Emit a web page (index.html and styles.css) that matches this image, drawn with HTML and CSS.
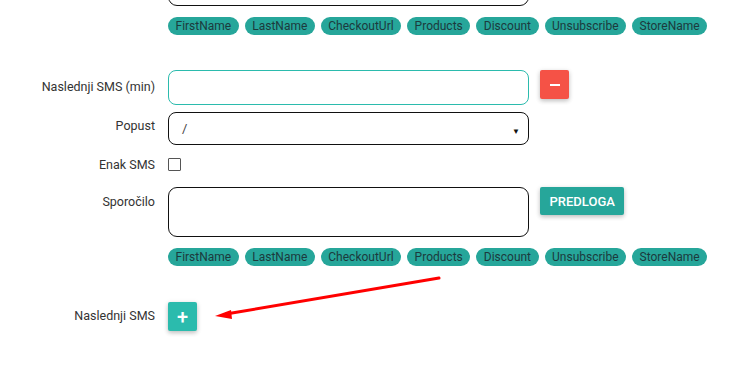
FILE: index.html
```html
<!DOCTYPE html>
<html>
<head>
<meta charset="utf-8">
<link rel="stylesheet" href="styles.css">
</head>
<body>
<div class="page">
  <div class="row row-top">
    <div class="label"></div>
    <div class="field"><div class="textarea"></div></div>
  </div>
  <div class="row chips-row">
    <div class="label"></div>
    <div class="chips">
      <span class="chip">FirstName</span><span class="chip">LastName</span><span class="chip">CheckoutUrl</span><span class="chip">Products</span><span class="chip">Discount</span><span class="chip">Unsubscribe</span><span class="chip">StoreName</span>
    </div>
  </div>

  <div class="row row-input">
    <div class="label label-mid">Naslednji SMS (min)</div>
    <div class="field"><div class="input input-active"></div></div>
    <div class="side"><button class="sq-btn btn-red"><span class="minus"></span></button></div>
  </div>
  <div class="row row-select">
    <div class="label label-select">Popust</div>
    <div class="field"><div class="select"><span class="sel-val">/</span><span class="caret">&#9660;</span></div></div>
  </div>
  <div class="row row-check">
    <div class="label label-check">Enak SMS</div>
    <div class="field"><span class="checkbox"></span></div>
  </div>
  <div class="row row-msg">
    <div class="label label-msg">Sporočilo</div>
    <div class="field"><div class="textarea"></div></div>
    <div class="side"><button class="btn-teal">PREDLOGA</button></div>
  </div>
  <div class="row chips-row">
    <div class="label"></div>
    <div class="chips">
      <span class="chip">FirstName</span><span class="chip">LastName</span><span class="chip">CheckoutUrl</span><span class="chip">Products</span><span class="chip">Discount</span><span class="chip">Unsubscribe</span><span class="chip">StoreName</span>
    </div>
  </div>

  <div class="row row-add">
    <div class="label label-add">Naslednji SMS</div>
    <div class="field"><button class="sq-btn btn-plus">+</button></div>
  </div>

  <svg class="arrow" width="746" height="372" viewBox="0 0 746 372">
    <line x1="439" y1="278" x2="226" y2="314" stroke="#ff0000" stroke-width="3" stroke-linecap="round"/>
    <polygon points="215,316 231,310 232,319" fill="#ff0000"/>
  </svg>
</div>
</body>
</html>
```
FILE: styles.css
```css
html, body {
  margin: 0;
  padding: 0;
  background: #fff;
}
body {
  font-family: Roboto, "Liberation Sans", sans-serif;
  font-size: 12.5px;
  color: #333;
}
.page {
  position: relative;
  width: 746px;
  height: 372px;
  overflow: hidden;
}
.row {
  display: flex;
  align-items: flex-start;
}
.label {
  width: 155px;
  margin-right: 13px;
  text-align: right;
  flex: none;
  line-height: 16px;
}
.field {
  width: 361px;
  flex: none;
}
.side {
  margin-left: 11px;
}
.row-top {
  margin-top: -44px;
}
.textarea {
  height: 50px;
  box-sizing: border-box;
  border: 1.5px solid #111;
  border-radius: 9px;
}
.chips-row {
  margin-top: 11px;
}
.chips {
  display: flex;
  gap: 6px;
  white-space: nowrap;
}
.chip {
  display: inline-block;
  height: 18px;
  line-height: 18px;
  padding: 0 7.5px;
  border-radius: 9px;
  background: #26a69a;
  color: #1c3a3d;
  font-size: 12px;
}
.row-input {
  margin-top: 35px;
}
.label-mid {
  padding-top: 9px;
}
.input {
  height: 35px;
  box-sizing: border-box;
  border: 1px solid #2bbbad;
  border-radius: 8px;
}
.sq-btn {
  width: 29px;
  height: 29px;
  border: none;
  border-radius: 2px;
  padding: 0;
  display: flex;
  align-items: center;
  justify-content: center;
  box-shadow: 0 2px 4px rgba(0,0,0,0.2), 0 1px 6px rgba(0,0,0,0.08);
}
.btn-red {
  background: #f55246;
}
.minus {
  display: block;
  width: 10px;
  height: 2px;
  background: #fff;
}
.row-select {
  margin-top: 7px;
}
.label-select {
  padding-top: 6px;
}
.select {
  height: 33px;
  box-sizing: border-box;
  border: 1.5px solid #111;
  border-radius: 8px;
  display: flex;
  align-items: center;
  justify-content: space-between;
  padding: 0 8px 0 13px;
}
.sel-val {
  color: #444;
  font-size: 13px;
}
.caret {
  font-size: 8px;
  color: #111;
  margin-top: 5px;
}
.row-check {
  margin-top: 13px;
}
.label-check {
  margin-top: -1px;
}
.checkbox {
  display: block;
  width: 13px;
  height: 13px;
  box-sizing: border-box;
  border: 1.5px solid #555;
  border-radius: 1px;
}
.row-msg {
  margin-top: 14px;
}
.label-msg {
  padding-top: 7px;
}
.btn-teal {
  height: 28px;
  border: none;
  border-radius: 2px;
  background: #26a69a;
  color: #fff;
  font-family: Roboto, "Liberation Sans", sans-serif;
  font-weight: 500;
  font-size: 13px;
  letter-spacing: 0;
  padding: 0 9.5px;
  box-shadow: 0 2px 4px rgba(0,0,0,0.2), 0 1px 6px rgba(0,0,0,0.08);
}
.row-add {
  margin-top: 36px;
}
.label-add {
  padding-top: 6px;
}
.btn-plus {
  background: #2bbbad;
  color: #fff;
  font-size: 20px;
  font-weight: 500;
  font-family: Roboto, "Liberation Sans", sans-serif;
  line-height: 1;
}
.arrow {
  position: absolute;
  left: 0;
  top: 0;
  pointer-events: none;
}
```
